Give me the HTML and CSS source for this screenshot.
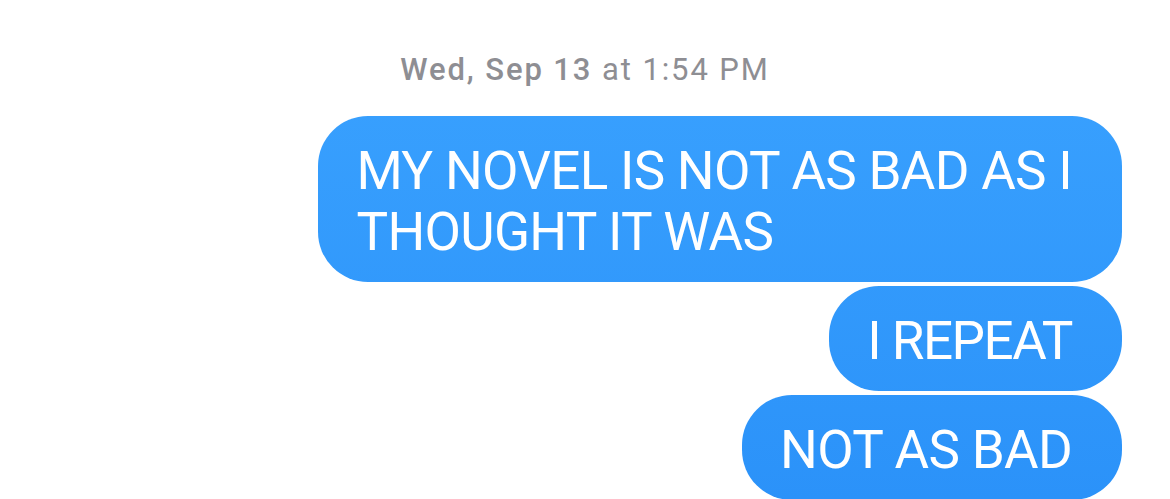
FILE: index.html
```html
<!DOCTYPE html>
<html lang="en">
<head>
    <meta charset="UTF-8">
    <meta name="viewport" content="width=device-width, initial-scale=1.0">
    <title>Messages</title>

    <link rel="stylesheet" href="styles.css">
</head>
<body>
    <div class="thread">
        <p class="timestamp"><strong>Wed, Sep 13</strong> at 1:54 PM</p>

        <div class="bubble">MY NOVEL IS NOT AS BAD AS I<br>THOUGHT IT WAS</div>
        <div class="bubble">I REPEAT</div>
        <div class="bubble">NOT AS BAD</div>
    </div>
</body>
</html>
```

FILE: styles.css
```css
* {
    margin: 0;
    padding: 0;
    box-sizing: border-box;
}

body {
    background: #fff;
    font-family: Roboto, "Liberation Sans", Arial, sans-serif;
}

.thread {
    display: flex;
    flex-direction: column;
    align-items: flex-end;
    gap: 4px;
    padding: 50px 48px 0 0;
}

.timestamp {
    align-self: stretch;
    text-align: center;
    padding-left: 48px;
    margin-bottom: 22px;
    font-size: 31px;
    line-height: 40px;
    letter-spacing: 1.9px;
    color: #8e8e93;
}

.timestamp strong {
    font-weight: 500;
}

.bubble {
    padding: 25px 50px 19px 38px;
    border-radius: 50px;
    font-size: 53px;
    line-height: 61px;
    letter-spacing: -0.7px;
    color: #fff;
    background: linear-gradient(to bottom, #3ba3ff, #2b92f9) fixed;
}

.bubble:nth-of-type(2) {
    letter-spacing: -1.5px;
}
```
